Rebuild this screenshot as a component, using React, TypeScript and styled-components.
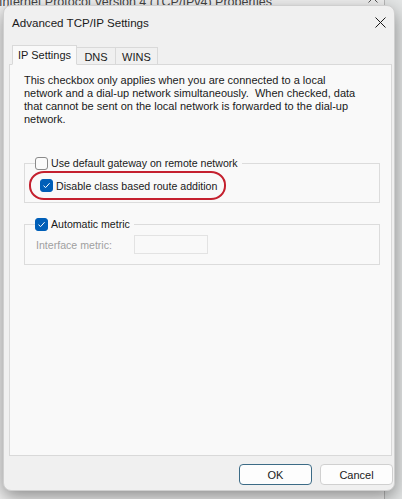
import React from "react";
import styled, { createGlobalStyle } from "styled-components";

const GlobalStyle = createGlobalStyle`
  html, body {
    margin: 0;
    padding: 0;
    width: 402px;
    height: 499px;
    overflow: hidden;
    background: #e4e6e6;
  }
  * { box-sizing: border-box; }
`;

const uiFont = `"Liberation Sans", "Noto Sans", sans-serif`;

const Desktop = styled.div`
  position: relative;
  width: 402px;
  height: 499px;
  overflow: hidden;
  font-family: ${uiFont};
  color: #1a1a1a;
`;

const ParentWindow = styled.div`
  position: absolute;
  left: -12px;
  top: -20px;
  width: 397px;
  height: 540px;
  background: #f0f0f0;
  border: 1px solid #b9b9b9;
`;

const ParentTitle = styled.div`
  position: absolute;
  left: 10px;
  top: 14px;
  font-size: 12.5px;
  color: #444;
  white-space: nowrap;
`;

const ParentClose = styled.svg`
  position: absolute;
  left: 379px;
  top: 12px;
`;

const Dialog = styled.div`
  position: absolute;
  left: 3px;
  top: 5px;
  width: 392px;
  height: 486px;
  background: #f0f0f0;
  border: 1px solid #cfcfcf;
  border-radius: 8px;
  box-shadow: 0 6px 18px rgba(0, 0, 0, 0.42);
  display: flex;
  flex-direction: column;
`;

const TitleBar = styled.div`
  height: 32px;
  display: flex;
  align-items: center;
  justify-content: space-between;
  padding: 0 3px 0 8px;
`;

const TitleText = styled.span`
  font-size: 11.6px;
  color: #1a1a1a;
`;

const CloseButton = styled.button`
  width: 22px;
  height: 22px;
  border: none;
  background: transparent;
  padding: 0;
  display: flex;
  align-items: center;
  justify-content: center;
`;

const TabRow = styled.div`
  display: flex;
  align-items: flex-end;
  margin: 6px 0 0 8px;
  height: 20px;
  position: relative;
  z-index: 1;
`;

const Tab = styled.div<{ $active?: boolean }>`
  height: ${(p) => (p.$active ? "20px" : "17px")};
  padding: 0 ${(p) => (p.$active ? "5px" : "6px")};
  min-width: ${(p) => (p.$active ? "63px" : "40px")};
  display: flex;
  align-items: center;
  justify-content: center;
  font-size: 11px;
  color: #1a1a1a;
  background: ${(p) => (p.$active ? "#f9f9f9" : "#f0f0f0")};
  border: 1px solid #d9d9d9;
  border-bottom: ${(p) => (p.$active ? "1px solid #f9f9f9" : "none")};
  margin-bottom: ${(p) => (p.$active ? "-1px" : "0")};
  margin-left: ${(p) => (p.$active ? "0" : "-1px")};
  padding-top: ${(p) => (p.$active ? "0" : "1px")};
`;

const Panel = styled.div`
  margin: 0 2px 0 5px;
  height: 392px;
  background: #f9f9f9;
  border: 1px solid #d9d9d9;
  padding: 9px 11px 0 14px;
  display: flex;
  flex-direction: column;
`;

const Info = styled.p`
  margin: 0;
  font-size: 11px;
  line-height: 13px;
  color: #1a1a1a;
  white-space: nowrap;
`;

const Group = styled.fieldset<{ $top: number }>`
  margin: ${(p) => p.$top}px 0 0 0;
  padding: 0 10px 10px 11px;
  border: 1px solid #dcdcdc;
  min-width: 0;
`;

const Legend = styled.legend`
  padding: 0 4px 0 0;
  margin-left: -1px;
  display: flex;
  align-items: center;
  gap: 3px;
  height: 14px;
`;

const Row = styled.div<{ $pad: number }>`
  display: flex;
  align-items: center;
  gap: 3px;
  padding-top: ${(p) => p.$pad}px;
`;

const Highlighted = styled.div`
  position: relative;
  display: flex;
  align-items: center;
  gap: 3px;
  margin-left: 4px;
`;

const RedMark = styled.span`
  position: absolute;
  left: -11px;
  top: -8px;
  width: 197px;
  height: 29px;
  border: 2.5px solid #c4202e;
  border-radius: 15px / 14px;
  pointer-events: none;
`;

const Box = styled.span<{ $checked?: boolean }>`
  width: 13px;
  height: 13px;
  flex: none;
  border-radius: 3px;
  background: ${(p) => (p.$checked ? "#005fb8" : "#fbfbfb")};
  border: 1px solid ${(p) => (p.$checked ? "#005fb8" : "#8a8a8a")};
  display: flex;
  align-items: center;
  justify-content: center;
`;

const Label = styled.span<{ $disabled?: boolean }>`
  font-size: 10.6px;
  white-space: nowrap;
  color: ${(p) => (p.$disabled ? "#a0a0a0" : "#1a1a1a")};
`;

const MetricInput = styled.div`
  width: 74px;
  height: 19px;
  margin-left: 19px;
  border: 1px solid #e3e3e3;
  background: #f9f9f9;
`;

const Footer = styled.div`
  display: flex;
  justify-content: flex-end;
  gap: 8px;
  padding: 8px 1px 0 0;
`;

const Button = styled.button<{ $primary?: boolean }>`
  width: 73px;
  height: 21px;
  font-family: ${uiFont};
  font-size: 11px;
  color: #1a1a1a;
  background: #fdfdfd;
  border: 1px solid ${(p) => (p.$primary ? "#3c6b86" : "#d0d0d0")};
  border-radius: 4px;
  padding: 0;
`;

const Check = () => (
  <svg width="9" height="9" viewBox="0 0 9 9">
    <path d="M1.5 4.7 L3.6 6.6 L7.6 2.2" fill="none" stroke="#fff" strokeWidth="1" />
  </svg>
);

const Checkbox = ({ checked }: { checked?: boolean }) => (
  <Box $checked={checked}>{checked && <Check />}</Box>
);

export default function App() {
  return (
    <>
      <GlobalStyle />
      <Desktop>
        <ParentWindow>
          <ParentTitle>Internet Protocol Version 4 (TCP/IPv4) Properties</ParentTitle>
          <ParentClose width="10" height="10" viewBox="0 0 10 10">
            <path d="M0.5 0.5 L9.5 9.5 M9.5 0.5 L0.5 9.5" stroke="#555" strokeWidth="1" />
          </ParentClose>
        </ParentWindow>
        <Dialog>
          <TitleBar>
            <TitleText>Advanced TCP/IP Settings</TitleText>
            <CloseButton aria-label="Close">
              <svg width="11" height="11" viewBox="0 0 11 11">
                <path d="M0.5 0.5 L10.5 10.5 M10.5 0.5 L0.5 10.5" stroke="#1a1a1a" strokeWidth="1" />
              </svg>
            </CloseButton>
          </TitleBar>
          <TabRow>
            <Tab $active>IP Settings</Tab>
            <Tab>DNS</Tab>
            <Tab>WINS</Tab>
          </TabRow>
          <Panel>
            <Info>
              This checkbox only applies when you are connected to a local
              <br />
              network and a dial-up network simultaneously.&nbsp; When checked, data
              <br />
              that cannot be sent on the local network is forwarded to the dial-up
              <br />
              network.
            </Info>
            <Group $top={30}>
              <Legend>
                <Checkbox />
                <Label>Use default gateway on remote network</Label>
              </Legend>
              <Row $pad={9}>
                <Highlighted>
                  <RedMark />
                  <Checkbox checked />
                  <Label>Disable class based route addition</Label>
                </Highlighted>
              </Row>
            </Group>
            <Group $top={14}>
              <Legend>
                <Checkbox checked />
                <Label>Automatic metric</Label>
              </Legend>
              <Row $pad={4}>
                <Label $disabled>Interface metric:</Label>
                <MetricInput />
              </Row>
            </Group>
          </Panel>
          <Footer>
            <Button $primary>OK</Button>
            <Button>Cancel</Button>
          </Footer>
        </Dialog>
      </Desktop>
    </>
  );
}
